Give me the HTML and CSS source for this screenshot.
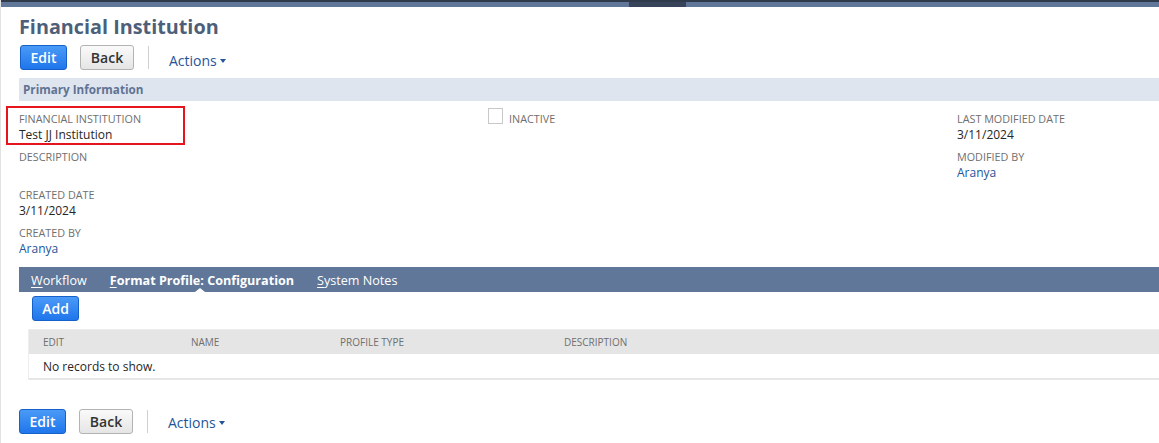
FILE: index.html
```html
<!DOCTYPE html>
<html>
<head>
<meta charset="utf-8">
<link rel="stylesheet" href="styles.css">
</head>
<body>
<div class="topbar"><div class="seg a"></div><div class="seg b"></div><div class="seg c"></div></div>
<div class="page">
  <h1 class="title">Financial Institution</h1>
  <div class="btnrow">
    <button class="btn primary">Edit</button>
    <button class="btn secondary">Back</button>
    <span class="sep"></span>
    <span class="actions">Actions<span class="caret"></span></span>
  </div>
  <div class="sechead">Primary Information</div>
  <div class="fields">
    <div class="col">
      <div class="field highlight">
        <div class="label">FINANCIAL INSTITUTION</div>
        <div class="value">Test JJ Institution</div>
        <span class="redbox"></span>
      </div>
      <div class="field">
        <div class="label">DESCRIPTION</div>
        <div class="value"></div>
      </div>
      <div class="field">
        <div class="label">CREATED DATE</div>
        <div class="value">3/11/2024</div>
      </div>
      <div class="field">
        <div class="label">CREATED BY</div>
        <div class="value link">Aranya</div>
      </div>
    </div>
    <div class="col">
      <div class="check"><span class="box"></span><span class="label">INACTIVE</span></div>
    </div>
    <div class="col">
      <div class="field">
        <div class="label">LAST MODIFIED DATE</div>
        <div class="value">3/11/2024</div>
      </div>
      <div class="field">
        <div class="label">MODIFIED BY</div>
        <div class="value link">Aranya</div>
      </div>
    </div>
  </div>
  <div class="tabs">
    <span class="tab"><u>W</u>orkflow</span>
    <span class="tab active"><u>F</u>ormat Profile: Configuration<span class="notch"></span></span>
    <span class="tab"><u>S</u>ystem Notes</span>
  </div>
  <div class="tabbody">
    <button class="btn primary add">Add</button>
    <div class="table">
      <div class="thead">
        <span class="th c1">EDIT</span>
        <span class="th c2">NAME</span>
        <span class="th c3">PROFILE TYPE</span>
        <span class="th c4">DESCRIPTION</span>
        <span class="th c5"></span>
      </div>
      <div class="trow">No records to show.</div>
    </div>
  </div>
  <div class="btnrow bottom">
    <button class="btn primary">Edit</button>
    <button class="btn secondary">Back</button>
    <span class="sep"></span>
    <span class="actions">Actions<span class="caret"></span></span>
  </div>
</div>
</body>
</html>
```

FILE: styles.css
```css
* { box-sizing: border-box; }
html, body { margin: 0; padding: 0; background: #fff; }
body {
  font-family: "Open Sans", "Liberation Sans", sans-serif;
  color: #262626;
  border-left: 1px solid #e2e2e2;
  min-height: 443px;
  overflow: hidden;
}
.topbar {
  height: 7px;
  border-top: 2px solid #2f3a4b;
  background: #607799;
  display: flex;
}
.topbar .seg.a { width: 628px; }
.topbar .seg.b { width: 57px; background: #37445a; }
.topbar .seg.c { flex: 1; }
.page { padding-left: 18px; }
.title {
  margin: 0;
  padding-top: 6px;
  font-size: 19.8px;
  line-height: 27px;
  font-weight: 700;
  color: #4d5f79;
}
.btnrow {
  display: flex;
  align-items: center;
  margin-top: 5px;
  height: 25px;
  padding-left: 1px;
}
.btn {
  font-family: "Open Sans", "Liberation Sans", sans-serif;
  font-size: 14px;
  height: 25px;
  padding: 0 12px;
  border-radius: 3px;
  cursor: pointer;
  line-height: 22px;
}
.btn.primary {
  background: linear-gradient(#4a9af7, #1f76eb);
  border: 1px solid #1560c9;
  color: #fff;
  font-weight: 600;
  width: 47px;
  padding: 0;
}
.btn.secondary {
  background: linear-gradient(#fafafa, #e5e5e5);
  border: 1px solid #b3b3b3;
  color: #333;
  font-weight: 600;
  width: 54px;
  padding: 0;
  margin-left: 13px;
}
.sep {
  width: 1px;
  height: 23px;
  background: #d0d0d0;
  margin-left: 14px;
}
.actions {
  margin-left: 20px;
  font-size: 14px;
  color: #255599;
  padding-top: 5px;
  display: flex;
  align-items: center;
}
.btnrow.bottom .actions { padding-top: 2px; }
.caret {
  display: inline-block;
  width: 0; height: 0;
  border-left: 3.5px solid transparent;
  border-right: 3.5px solid transparent;
  border-top: 4px solid #255599;
  margin-left: 3px;
  margin-top: 1px;
}
.sechead {
  margin-top: 8px;
  height: 23px;
  background: #dfe5ef;
  font-size: 11.7px;
  font-weight: 700;
  color: #5f7393;
  line-height: 23px;
  padding-left: 4px;
}
.fields {
  display: grid;
  grid-template-columns: 469px 469px 1fr;
  padding-top: 10px;
  padding-left: 0;
}
.field {
  height: 38px;
  position: relative;
}
.label {
  font-size: 10.8px;
  line-height: 15px;
  color: #6f6f6f;
  text-transform: uppercase;
}
.value {
  font-size: 12px;
  line-height: 17px;
  color: #262626;
  min-height: 17px;
}
.value.link { color: #255599; }
.redbox {
  position: absolute;
  left: -13px;
  top: -5px;
  width: 179px;
  height: 39px;
  border: 2px solid #e8141b;
}
.check {
  display: flex;
  align-items: flex-start;
}
.check .box {
  width: 15px;
  height: 16px;
  border: 1px solid #c8c8c8;
  margin-top: -3px;
  margin-left: 0;
  margin-right: 6px;
  background: #fff;
}
.tabs {
  margin-top: 4px;
  height: 25px;
  background: #607799;
  display: flex;
  align-items: center;
  padding-left: 12px;
  padding-top: 2px;
}
.tab {
  font-size: 12.6px;
  color: #fff;
  margin-right: 23px;
  position: relative;
  line-height: 23px;
}
.tab.active { font-weight: 700; }
.tab u { text-decoration: underline; text-underline-offset: 2px; }
.notch {
  position: absolute;
  left: 85px;
  bottom: 0;
  width: 0; height: 0;
  border-left: 5px solid transparent;
  border-right: 5px solid transparent;
  border-bottom: 4px solid #fff;
}
.tabbody { padding-left: 9px; padding-top: 4px; }
.btn.add { margin-left: 4px; width: 47px; }
.table {
  margin-top: 8px;
  border-left: 1px solid #eee;
}
.thead {
  height: 25px;
  background: #e5e5e5;
  border-top: 1px solid #ececec;
  display: flex;
  align-items: center;
  position: relative;
}
.th {
  font-size: 10px;
  color: #6f6f6f;
  position: absolute;
}
.th.c1 { left: 14px; }
.th.c2 { left: 162px; }
.th.c3 { left: 311px; }
.th.c4 { left: 535px; }
.th.c5 { left: 1130px; width: 3px; height: 5px; background: #e0a048; }
.trow {
  height: 26px;
  border-bottom: 2px solid #e6e6e6;
  font-size: 12px;
  line-height: 25px;
  padding-left: 14px;
  color: #262626;
}
.btnrow.bottom { margin-top: 29px; padding-left: 0; }
```
